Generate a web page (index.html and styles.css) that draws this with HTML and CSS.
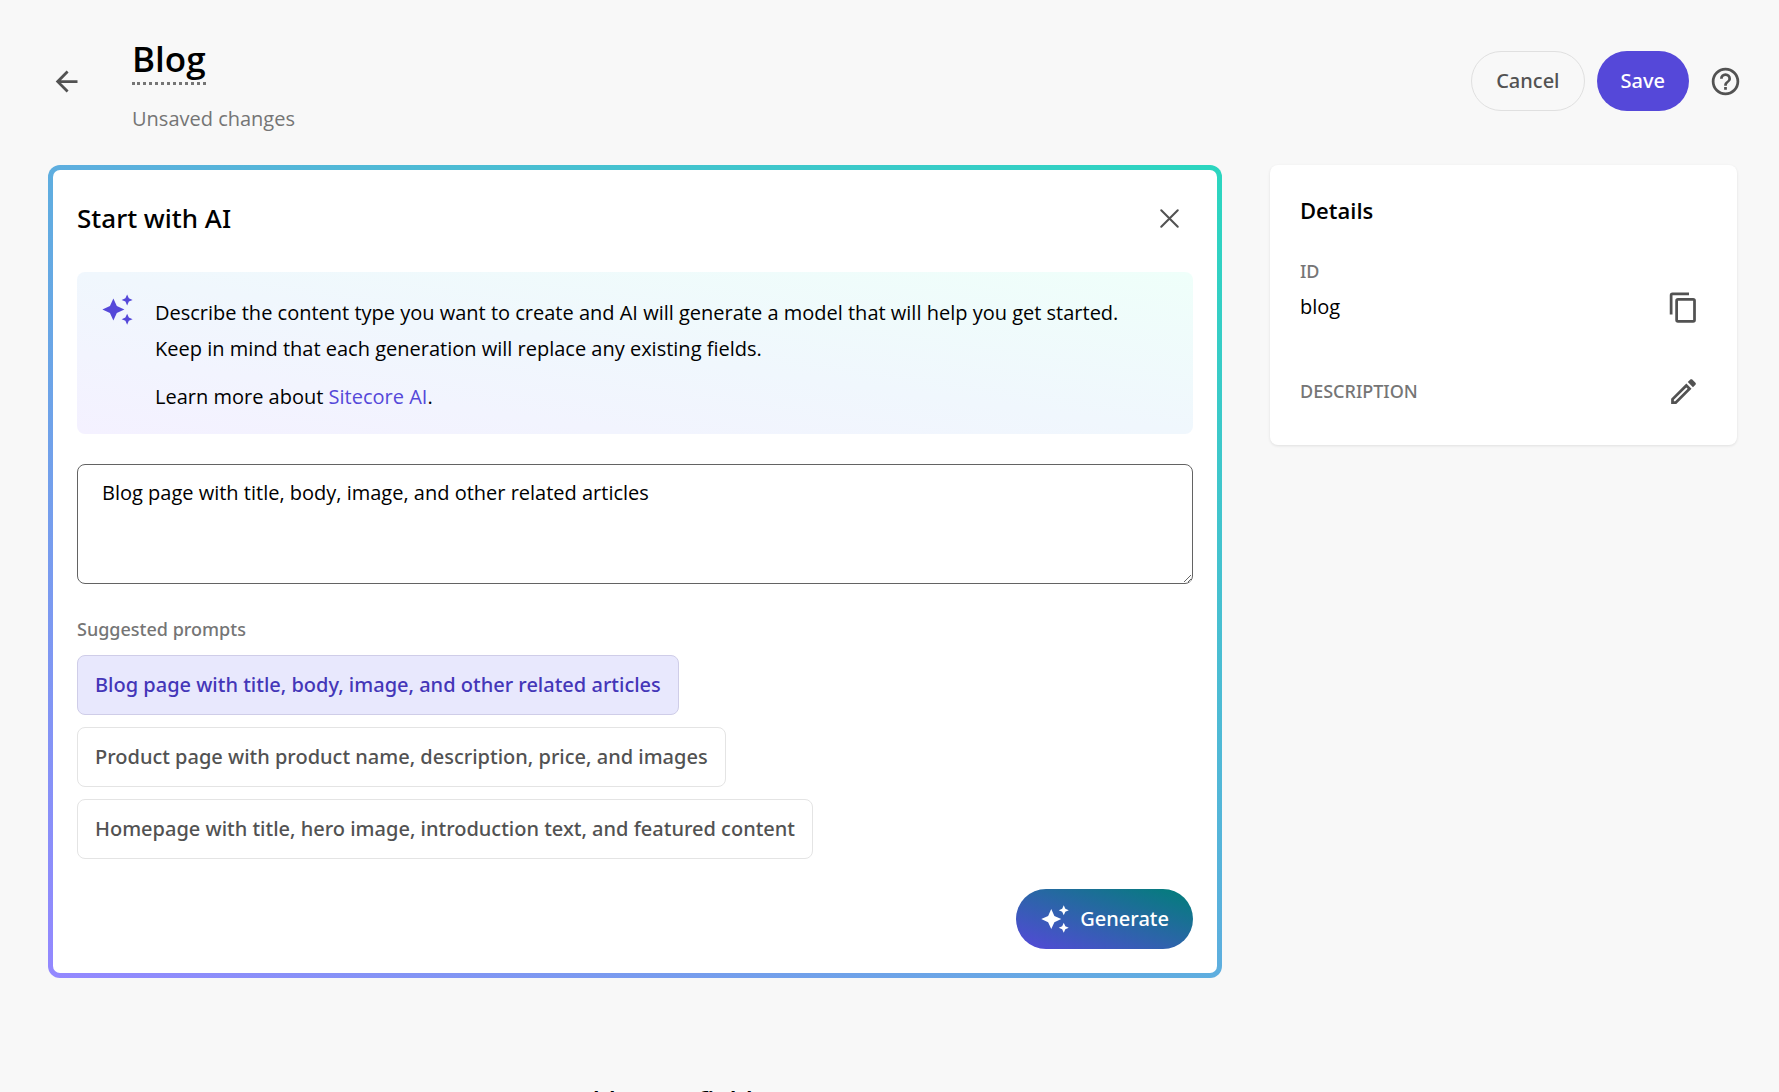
FILE: index.html
```html
<!DOCTYPE html>
<html lang="en">
<head>
<meta charset="utf-8">
<meta name="viewport" content="width=device-width, initial-scale=1">
<title>Blog</title>
<link rel="stylesheet" href="styles.css">
</head>
<body>
<header class="topbar">
  <button class="icon-button" type="button" aria-label="Back">
    <svg class="icon" viewBox="0 0 24 24"><path d="M20 11v2H8l5.5 5.5-1.42 1.42L4.16 12l7.92-7.92L13.5 5.5 8 11h12z"/></svg>
  </button>
  <div class="heading">
    <h1 class="page-title">Blog</h1>
    <p class="status">Unsaved changes</p>
  </div>
  <div class="actions">
    <button class="button button-outline" type="button">Cancel</button>
    <button class="button button-primary" type="button">Save</button>
    <button class="icon-button" type="button" aria-label="Help">
      <svg class="icon" viewBox="0 0 24 24"><path d="M11 18h2v-2h-2v2m1-16A10 10 0 0 0 2 12a10 10 0 0 0 10 10 10 10 0 0 0 10-10A10 10 0 0 0 12 2m0 18c-4.41 0-8-3.59-8-8s3.59-8 8-8 8 3.59 8 8-3.59 8-8 8m0-14a4 4 0 0 0-4 4h2a2 2 0 0 1 2-2 2 2 0 0 1 2 2c0 2-3 1.75-3 5h2c0-2.25 3-2.5 3-5a4 4 0 0 0-4-4z"/></svg>
    </button>
  </div>
</header>
<main class="layout">
  <div class="content">
    <section class="ai-card">
      <div class="ai-header">
        <h2 class="ai-title">Start with AI</h2>
        <button class="icon-button" type="button" aria-label="Close">
          <svg class="icon icon-close" viewBox="0 0 24 24"><path d="M6 6l12 12M18 6L6 18"/></svg>
        </button>
      </div>
      <div class="notice">
        <svg class="icon icon-sparkle" viewBox="0 0 24 24"><path d="M9 4l2.5 5.5L17 12l-5.5 2.5L9 20l-2.5-5.5L1 12l5.5-2.5zM19 9l-1.26-2.74L15 5l2.74-1.25L19 1l1.25 2.75L23 5l-2.75 1.26zM19 23l-1.26-2.74L15 19l2.74-1.25L19 15l1.25 2.75L23 19l-2.75 1.26z"/></svg>
        <div class="notice-text">
          <p>Describe the content type you want to create and AI will generate a model that will help you get started. Keep in mind that each generation will replace any existing fields.</p>
          <p>Learn more about <a class="link" href="#">Sitecore AI</a>.</p>
        </div>
      </div>
      <textarea class="prompt" aria-label="Prompt">Blog page with title, body, image, and other related articles</textarea>
      <h3 class="label">Suggested prompts</h3>
      <div class="suggestions">
        <button class="chip chip-selected" type="button">Blog page with title, body, image, and other related articles</button>
        <button class="chip" type="button">Product page with product name, description, price, and images</button>
        <button class="chip" type="button">Homepage with title, hero image, introduction text, and featured content</button>
      </div>
      <button class="button button-generate" type="button">
        <svg class="icon icon-small" viewBox="0 0 24 24"><path d="M9 4l2.5 5.5L17 12l-5.5 2.5L9 20l-2.5-5.5L1 12l5.5-2.5zM19 9l-1.26-2.74L15 5l2.74-1.25L19 1l1.25 2.75L23 5l-2.75 1.26zM19 23l-1.26-2.74L15 19l2.74-1.25L19 15l1.25 2.75L23 19l-2.75 1.26z"/></svg>
        Generate
      </button>
    </section>
    <h2 class="empty-title">Now add some fields</h2>
  </div>
  <aside class="details">
    <h2 class="details-title">Details</h2>
    <dl class="fields">
      <div class="field">
        <div class="field-text">
          <dt class="label">ID</dt>
          <dd class="field-value">blog</dd>
        </div>
        <button class="icon-button" type="button" aria-label="Copy ID">
          <svg class="icon" viewBox="0 0 24 24"><path d="M19 21H8V7h11m0-2H8a2 2 0 0 0-2 2v14a2 2 0 0 0 2 2h11a2 2 0 0 0 2-2V7a2 2 0 0 0-2-2m-3-4H4a2 2 0 0 0-2 2v14h2V3h12V1z"/></svg>
        </button>
      </div>
      <div class="field">
        <div class="field-text">
          <dt class="label">DESCRIPTION</dt>
        </div>
        <button class="icon-button" type="button" aria-label="Edit description">
          <svg class="icon" viewBox="0 0 24 24"><path d="M14.06 9l.94.94L5.92 19H5v-.92L14.06 9m3.6-6c-.25 0-.51.1-.7.29l-1.83 1.83 3.75 3.75 1.83-1.83c.39-.39.39-1.04 0-1.41l-2.34-2.34c-.2-.2-.45-.29-.71-.29m-3.6 3.19L3 17.25V21h3.75L17.81 9.94l-3.75-3.75z"/></svg>
        </button>
      </div>
    </dl>
  </aside>
</main>
</body>
</html>
```
FILE: styles.css
```css
* {
  box-sizing: border-box;
}

body {
  margin: 0;
  background: #f8f8f8;
  color: #000;
  font: 20px/36px "Open Sans", "Noto Sans", sans-serif;
}

h1, h2, h3, p, dl, dd {
  margin: 0;
}

button, textarea {
  font: inherit;
}

button {
  cursor: pointer;
}

.icon {
  flex: none;
  width: 33px;
  height: 33px;
  fill: currentColor;
}

.icon-small {
  width: 30px;
  height: 30px;
}

.icon-button {
  display: flex;
  align-items: center;
  justify-content: center;
  flex: none;
  width: 48px;
  height: 48px;
  padding: 0;
  border: 0;
  background: none;
  color: #525252;
}

.icon-close {
  fill: none;
  stroke: currentColor;
  stroke-width: 1.5;
  stroke-linecap: round;
}

.topbar {
  display: flex;
  align-items: flex-start;
  gap: 42px;
  padding: 36px 30px 28px 42px;
}

.topbar > .icon-button,
.actions {
  height: 90px;
}

.heading {
  flex: 1;
}

.page-title {
  width: fit-content;
  margin-bottom: 16px;
  border-bottom: 3px dotted #757575;
  font-size: 35px;
  font-weight: 600;
  line-height: 46px;
}

.status {
  color: #757575;
}

.actions {
  display: flex;
  align-items: center;
  gap: 12px;
}

.button {
  height: 60px;
  padding: 0 24px;
  border: 0;
  border-radius: 30px;
  font-family: "Noto Sans", sans-serif;
  font-weight: 500;
}

.button-outline {
  border: 1px solid #e0e0e0;
  background: none;
  color: #525252;
}

.button-primary {
  background: #5548d9;
  color: #fff;
}

.layout {
  display: grid;
  grid-template-columns: minmax(0, 1fr) 467px;
  align-items: start;
  gap: 48px;
  padding: 0 42px 48px 48px;
}

.ai-card {
  display: flex;
  flex-direction: column;
  padding: 24px;
  border: 5px solid transparent;
  border-radius: 12px;
  background:
    linear-gradient(#fff, #fff) padding-box,
    linear-gradient(to top right, #9488ff, #5eaedf, #2bd6bf) border-box;
}

.ai-header {
  display: flex;
  align-items: center;
  justify-content: space-between;
  margin-bottom: 30px;
}

.ai-title {
  font-family: "Noto Sans", sans-serif;
  font-size: 26px;
  font-weight: 500;
}

.notice {
  display: flex;
  gap: 21px;
  padding: 21px 24px;
  border-radius: 8px;
  background: linear-gradient(to top right, #f4f1ff, #f0f7fd, #effffa);
}

.icon-sparkle {
  color: #5548d9;
}

.notice-text {
  display: grid;
  gap: 12px;
  padding-top: 2px;
  margin-bottom: -2px;
}

.link {
  color: #5548d9;
  text-decoration: none;
}

.prompt {
  height: 120px;
  margin: 30px 0 27px;
  padding: 10px 24px;
  border: 1px solid #636363;
  border-radius: 8px;
  background: #fff;
  color: inherit;
  resize: vertical;
}

.label {
  color: #757575;
  font-family: "Noto Sans", sans-serif;
  font-size: 18px;
  font-weight: 500;
}

.suggestions {
  display: flex;
  flex-direction: column;
  align-items: flex-start;
  gap: 12px;
  margin: 8px 0 30px;
}

.chip {
  min-height: 60px;
  padding: 0 17px;
  border: 1px solid #e4e4e4;
  border-radius: 8px;
  background: #fff;
  color: #525252;
  font-family: "Noto Sans", sans-serif;
  font-weight: 500;
  text-align: left;
}

.chip-selected {
  border-color: #cfcde8;
  background: #e8e8fd;
  color: #4436b8;
}

.button-generate {
  display: flex;
  align-items: center;
  align-self: flex-end;
  gap: 10px;
  background: linear-gradient(to top right, #5548d9, #2b65a8, #007f78);
  color: #fff;
}

.empty-title {
  margin-top: 104px;
  font-size: 26px;
  font-weight: 600;
  text-align: center;
}

.details {
  padding: 27px 30px 36px;
  border-radius: 8px;
  background: #fff;
  box-shadow: 0 1px 3px rgba(0, 0, 0, 0.1);
}

.details-title {
  margin-bottom: 25px;
  font-size: 22px;
  font-weight: 600;
}

.fields {
  display: grid;
  gap: 48px;
}

.field {
  display: flex;
  align-items: flex-end;
  justify-content: space-between;
}

.field .icon-button {
  height: 36px;
}
```
